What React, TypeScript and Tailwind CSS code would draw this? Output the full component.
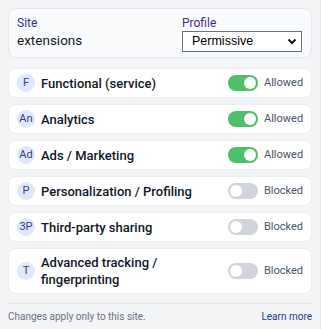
import React from "react";

type Row = { badge: string; label: string; on: boolean };

const rows: Row[] = [
  { badge: "F", label: "Functional (service)", on: true },
  { badge: "An", label: "Analytics", on: true },
  { badge: "Ad", label: "Ads / Marketing", on: true },
  { badge: "P", label: "Personalization / Profiling", on: false },
  { badge: "3P", label: "Third-party sharing", on: false },
  { badge: "T", label: "Advanced tracking / fingerprinting", on: false },
];

function Toggle({ on }: { on: boolean }) {
  return (
    <div
      className={
        on
          ? "w-[30px] h-[16px] rounded-full bg-[#4fbf69] flex items-center justify-end px-[2px]"
          : "w-[30px] h-[16px] rounded-full bg-[#d1d5db] flex items-center justify-start px-[2px]"
      }
    >
      <div className="w-[12px] h-[12px] rounded-full bg-white" />
    </div>
  );
}

export default function App() {
  return (
    <div className="w-[321px] h-[329px] bg-[#f3f4f6] border-r border-[#e5e7eb] p-2 flex flex-col font-['Roboto',sans-serif] overflow-hidden">
      <div className="h-[50px] shrink-0 rounded-lg border border-[#e5e7eb] bg-[#f9fafb] flex justify-between pl-[8px] pr-[9px] pt-[7px]">
        <div className="flex flex-col">
          <span className="text-[12px] leading-[15px] text-[#35358a]">Site</span>
          <span className="text-[13.5px] leading-[18px] text-[#111827]">extensions</span>
        </div>
        <div className="flex flex-col w-[120px]">
          <span className="text-[12px] leading-[15px] text-[#4b2a87]">Profile</span>
          <div className="h-[21px] border border-[#6b7280] bg-white flex items-center justify-between pl-[9px] pr-[4px]">
            <span className="text-[12.5px] text-black font-['Liberation_Sans',sans-serif]">Permissive</span>
            <svg width="10" height="7" viewBox="0 0 10 7">
              <path d="M1.5 1.5 L5 5 L8.5 1.5" fill="none" stroke="#111" strokeWidth="2" />
            </svg>
          </div>
        </div>
      </div>
      <div className="flex flex-col gap-[6px] mt-[10px]">
        {rows.map((r) => (
          <div
            key={r.label}
            className="rounded-lg border border-[#eceef1] bg-white flex items-center pl-[8px] pr-[9px] py-[5px]"
          >
            <div className="w-[18px] h-[18px] rounded-full bg-[#dfe8fb] flex items-center justify-center text-[11px] text-[#3b3a8c] shrink-0">
              {r.badge}
            </div>
            <div className="ml-[6px] flex-1 text-[13px] leading-[17px] font-medium text-[#111827]">
              {r.label}
            </div>
            <div className="ml-[12px] flex items-center gap-[6px] shrink-0">
              <Toggle on={r.on} />
              <span className="text-[11px] text-[#4b5563] w-[38px] text-right">{r.on ? "Allowed" : "Blocked"}</span>
            </div>
          </div>
        ))}
      </div>
      <div className="mt-[9px] border-t border-[#e5e7eb] pt-[5px] flex justify-between items-center">
        <span className="text-[10px] text-[#6b7280]">Changes apply only to this site.</span>
        <span className="text-[10px] text-[#1e3a8a]">Learn more</span>
      </div>
    </div>
  );
}
